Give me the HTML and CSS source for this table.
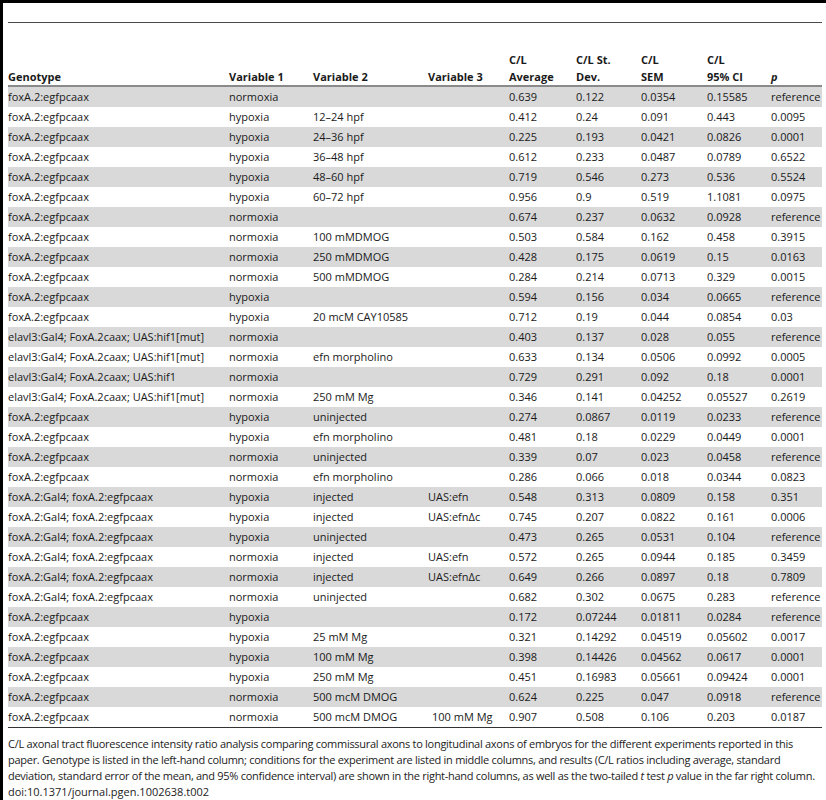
FILE: index.html
```html
<!DOCTYPE html>
<html lang="en">

<head>
    <meta charset="UTF-8">
    <meta name="viewport" content="width=device-width, initial-scale=1.0">
    <title>C/L ratio table</title>
    <link rel="stylesheet" href="styles.css">
</head>

<body>

    <div class="page">
        <table class="data">
            <colgroup>
                <col class="c-geno">
                <col class="c-var1">
                <col class="c-var2">
                <col class="c-var3">
                <col class="c-avg">
                <col class="c-sd">
                <col class="c-sem">
                <col class="c-ci">
                <col class="c-p">
            </colgroup>
            <thead>
                <tr>
                    <th>Genotype</th>
                    <th>Variable 1</th>
                    <th>Variable 2</th>
                    <th>Variable 3</th>
                    <th>C/L<br>Average</th>
                    <th>C/L St.<br>Dev.</th>
                    <th>C/L<br>SEM</th>
                    <th>C/L<br>95% CI</th>
                    <th><i>p</i></th>
                </tr>
            </thead>
            <tbody>
                <tr><td>foxA.2:egfpcaax</td><td>normoxia</td><td></td><td></td><td>0.639</td><td>0.122</td><td>0.0354</td><td>0.15585</td><td>reference</td></tr>
                <tr><td>foxA.2:egfpcaax</td><td>hypoxia</td><td>12–24 hpf</td><td></td><td>0.412</td><td>0.24</td><td>0.091</td><td>0.443</td><td>0.0095</td></tr>
                <tr><td>foxA.2:egfpcaax</td><td>hypoxia</td><td>24–36 hpf</td><td></td><td>0.225</td><td>0.193</td><td>0.0421</td><td>0.0826</td><td>0.0001</td></tr>
                <tr><td>foxA.2:egfpcaax</td><td>hypoxia</td><td>36–48 hpf</td><td></td><td>0.612</td><td>0.233</td><td>0.0487</td><td>0.0789</td><td>0.6522</td></tr>
                <tr><td>foxA.2:egfpcaax</td><td>hypoxia</td><td>48–60 hpf</td><td></td><td>0.719</td><td>0.546</td><td>0.273</td><td>0.536</td><td>0.5524</td></tr>
                <tr><td>foxA.2:egfpcaax</td><td>hypoxia</td><td>60–72 hpf</td><td></td><td>0.956</td><td>0.9</td><td>0.519</td><td>1.1081</td><td>0.0975</td></tr>
                <tr><td>foxA.2:egfpcaax</td><td>normoxia</td><td></td><td></td><td>0.674</td><td>0.237</td><td>0.0632</td><td>0.0928</td><td>reference</td></tr>
                <tr><td>foxA.2:egfpcaax</td><td>normoxia</td><td>100 mMDMOG</td><td></td><td>0.503</td><td>0.584</td><td>0.162</td><td>0.458</td><td>0.3915</td></tr>
                <tr><td>foxA.2:egfpcaax</td><td>normoxia</td><td>250 mMDMOG</td><td></td><td>0.428</td><td>0.175</td><td>0.0619</td><td>0.15</td><td>0.0163</td></tr>
                <tr><td>foxA.2:egfpcaax</td><td>normoxia</td><td>500 mMDMOG</td><td></td><td>0.284</td><td>0.214</td><td>0.0713</td><td>0.329</td><td>0.0015</td></tr>
                <tr><td>foxA.2:egfpcaax</td><td>hypoxia</td><td></td><td></td><td>0.594</td><td>0.156</td><td>0.034</td><td>0.0665</td><td>reference</td></tr>
                <tr><td>foxA.2:egfpcaax</td><td>hypoxia</td><td>20 mcM CAY10585</td><td></td><td>0.712</td><td>0.19</td><td>0.044</td><td>0.0854</td><td>0.03</td></tr>
                <tr><td>elavl3:Gal4; FoxA.2caax; UAS:hif1[mut]</td><td>normoxia</td><td></td><td></td><td>0.403</td><td>0.137</td><td>0.028</td><td>0.055</td><td>reference</td></tr>
                <tr><td>elavl3:Gal4; FoxA.2caax; UAS:hif1[mut]</td><td>normoxia</td><td>efn morpholino</td><td></td><td>0.633</td><td>0.134</td><td>0.0506</td><td>0.0992</td><td>0.0005</td></tr>
                <tr><td>elavl3:Gal4; FoxA.2caax; UAS:hif1</td><td>normoxia</td><td></td><td></td><td>0.729</td><td>0.291</td><td>0.092</td><td>0.18</td><td>0.0001</td></tr>
                <tr><td>elavl3:Gal4; FoxA.2caax; UAS:hif1[mut]</td><td>normoxia</td><td>250 mM Mg</td><td></td><td>0.346</td><td>0.141</td><td>0.04252</td><td>0.05527</td><td>0.2619</td></tr>
                <tr><td>foxA.2:egfpcaax</td><td>hypoxia</td><td>uninjected</td><td></td><td>0.274</td><td>0.0867</td><td>0.0119</td><td>0.0233</td><td>reference</td></tr>
                <tr><td>foxA.2:egfpcaax</td><td>hypoxia</td><td>efn morpholino</td><td></td><td>0.481</td><td>0.18</td><td>0.0229</td><td>0.0449</td><td>0.0001</td></tr>
                <tr><td>foxA.2:egfpcaax</td><td>normoxia</td><td>uninjected</td><td></td><td>0.339</td><td>0.07</td><td>0.023</td><td>0.0458</td><td>reference</td></tr>
                <tr><td>foxA.2:egfpcaax</td><td>normoxia</td><td>efn morpholino</td><td></td><td>0.286</td><td>0.066</td><td>0.018</td><td>0.0344</td><td>0.0823</td></tr>
                <tr><td>foxA.2:Gal4; foxA.2:egfpcaax</td><td>hypoxia</td><td>injected</td><td>UAS:efn</td><td>0.548</td><td>0.313</td><td>0.0809</td><td>0.158</td><td>0.351</td></tr>
                <tr><td>foxA.2:Gal4; foxA.2:egfpcaax</td><td>hypoxia</td><td>injected</td><td>UAS:efnΔc</td><td>0.745</td><td>0.207</td><td>0.0822</td><td>0.161</td><td>0.0006</td></tr>
                <tr><td>foxA.2:Gal4; foxA.2:egfpcaax</td><td>hypoxia</td><td>uninjected</td><td></td><td>0.473</td><td>0.265</td><td>0.0531</td><td>0.104</td><td>reference</td></tr>
                <tr><td>foxA.2:Gal4; foxA.2:egfpcaax</td><td>normoxia</td><td>injected</td><td>UAS:efn</td><td>0.572</td><td>0.265</td><td>0.0944</td><td>0.185</td><td>0.3459</td></tr>
                <tr><td>foxA.2:Gal4; foxA.2:egfpcaax</td><td>normoxia</td><td>injected</td><td>UAS:efnΔc</td><td>0.649</td><td>0.266</td><td>0.0897</td><td>0.18</td><td>0.7809</td></tr>
                <tr><td>foxA.2:Gal4; foxA.2:egfpcaax</td><td>normoxia</td><td>uninjected</td><td></td><td>0.682</td><td>0.302</td><td>0.0675</td><td>0.283</td><td>reference</td></tr>
                <tr><td>foxA.2:egfpcaax</td><td>hypoxia</td><td></td><td></td><td>0.172</td><td>0.07244</td><td>0.01811</td><td>0.0284</td><td>reference</td></tr>
                <tr><td>foxA.2:egfpcaax</td><td>hypoxia</td><td>25 mM Mg</td><td></td><td>0.321</td><td>0.14292</td><td>0.04519</td><td>0.05602</td><td>0.0017</td></tr>
                <tr><td>foxA.2:egfpcaax</td><td>hypoxia</td><td>100 mM Mg</td><td></td><td>0.398</td><td>0.14426</td><td>0.04562</td><td>0.0617</td><td>0.0001</td></tr>
                <tr><td>foxA.2:egfpcaax</td><td>hypoxia</td><td>250 mM Mg</td><td></td><td>0.451</td><td>0.16983</td><td>0.05661</td><td>0.09424</td><td>0.0001</td></tr>
                <tr><td>foxA.2:egfpcaax</td><td>normoxia</td><td>500 mcM DMOG</td><td></td><td>0.624</td><td>0.225</td><td>0.047</td><td>0.0918</td><td>reference</td></tr>
                <tr><td>foxA.2:egfpcaax</td><td>normoxia</td><td>500 mcM DMOG</td><td class="shift">100 mM Mg</td><td>0.907</td><td>0.508</td><td>0.106</td><td>0.203</td><td>0.0187</td></tr>
            </tbody>
        </table>

        <p class="caption">C/L axonal tract fluorescence intensity ratio analysis comparing commissural axons to longitudinal axons of embryos for the different experiments reported in this<br>
            paper. Genotype is listed in the left-hand column; conditions for the experiment are listed in middle columns, and results (C/L ratios including average, standard<br>
            deviation, standard error of the mean, and 95% confidence interval) are shown in the right-hand columns, as well as the two-tailed <i>t</i> test <i>p</i> value in the far right column.</p>
        <p class="doi">doi:10.1371/journal.pgen.1002638.t002</p>
    </div>

</body>

</html>
```

FILE: styles.css
```css
body {
    margin: 0;
    padding: 0;
    background-color: #fff;
    color: #1a1a1a;
    font-family: "Open Sans", "Liberation Sans", sans-serif;
    font-size: 11px;
}

.page {
    min-height: 797px;
    border-top: 3px solid #000;
    border-left: 3px solid #000;
    padding: 19px 4px 0 5px;
    box-sizing: border-box;
}

.data {
    width: 814px;
    border-collapse: collapse;
    table-layout: fixed;
    border-top: 1px solid #4a4a4a;
    border-bottom: 1px solid #333;
}

.c-geno { width: 221px; }
.c-var1 { width: 84px; }
.c-var2 { width: 115px; }
.c-var3 { width: 81px; }
.c-avg { width: 67px; }
.c-sd { width: 65px; }
.c-sem { width: 66px; }
.c-ci { width: 64px; }
.c-p { width: 51px; }

.data th {
    height: 62px;
    padding: 0;
    text-align: left;
    vertical-align: bottom;
    font-weight: bold;
    line-height: 17px;
    border-bottom: 2px solid #8a8a8a;
}

.data td {
    height: 20px;
    padding: 0;
    line-height: 20px;
    white-space: nowrap;
    vertical-align: middle;
}

.data tbody tr:nth-child(odd) {
    background-color: #d9d9d9;
}

.data td.shift {
    padding-left: 4px;
}

.caption {
    margin: 8px 0 0 0;
    line-height: 16px;
    letter-spacing: -0.28px;
    white-space: nowrap;
    color: #222;
}

.doi {
    margin: 0;
    line-height: 16px;
    color: #222;
}
```
